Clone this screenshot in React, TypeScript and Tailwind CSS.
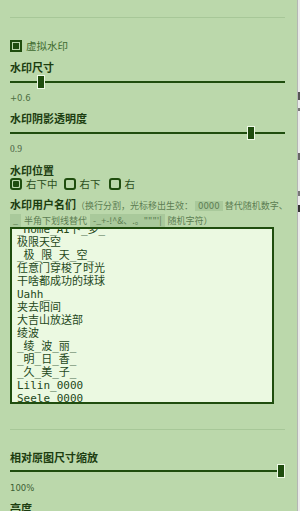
import React from "react";

const cjk = "font-['Noto_Sans_CJK_SC',sans-serif]";

function Slider({ pct }: { pct: number }) {
  return (
    <div className="relative h-[14px] w-[275px]">
      <div className="absolute left-0 right-0 top-[6px] h-[2px] bg-[#1f4d0e]" />
      <div
        className="absolute top-0 h-[14px] w-[8px] border border-[#eef8e6] bg-[#1f4d0e]"
        style={{ left: `${pct * 267}px` }}
      />
    </div>
  );
}

function Heading({ children }: { children: React.ReactNode }) {
  return (
    <div className={`${cjk} text-[11px] font-bold leading-[14px] text-[#1c3d10]`}>{children}</div>
  );
}

function Box({ checked }: { checked: boolean }) {
  return (
    <span className="flex h-[12px] w-[12px] items-center justify-center rounded-[3px] border-2 border-[#1f4d0e]">
      {checked && <span className="h-[6px] w-[6px] rounded-[1px] bg-[#1f4d0e]" />}
    </span>
  );
}

const names = [
  "_Home_AI卜_多_",
  "极限天空",
  "_极_限_天_空_",
  "任意门穿梭了时光",
  "干啥都成功的球球",
  "Uahh_",
  "夹去阳间",
  "大吉山放送部",
  "绫波",
  "_绫_波_丽_",
  "_明_日_香_",
  "_久_美_子_",
  "Lilin_0000",
  "Seele_0000",
];

export default function App() {
  return (
    <div className="flex h-[511px] w-[300px] overflow-hidden bg-[#e9e9e9]">
      <div className="h-full w-[297px] shrink-0 bg-[#bbd8ab] px-[10px]">
        <div className="mt-[17px] h-px w-[275px] bg-[#a7c798]" />

        {/* 虚拟水印 */}
        <div className="mt-[22px] flex h-[12px] items-center gap-[4px]">
          <span className="flex h-[12px] w-[12px] items-center justify-center border-2 border-[#1f4d0e]">
            <span className="h-[6px] w-[6px] bg-[#1f4d0e]" />
          </span>
          <span className={`${cjk} text-[10.5px] leading-[12px] text-[#3e6a2f]`}>虚拟水印</span>
        </div>

        <div className="mt-[8px]">
          <Heading>水印尺寸</Heading>
        </div>
        <div className="mt-[1px]">
          <Slider pct={0.1} />
        </div>
        <div className="mt-[3px] font-['DejaVu_Sans',sans-serif] text-[8.5px] leading-[12px] text-[#4d6e42]">
          +0.6
        </div>

        <div className="mt-[7px]">
          <Heading>水印阴影透明度</Heading>
        </div>
        <div className="mt-[1px]">
          <Slider pct={0.888} />
        </div>
        <div className="mt-[3px] font-['Liberation_Serif',serif] text-[9.5px] leading-[12px] text-[#4a5f43]">
          0.9
        </div>

        <div className="mt-[8px]">
          <Heading>水印位置</Heading>
        </div>
        <div className={`${cjk} mt-[1px] flex h-[12px] items-center text-[10.5px] leading-[12px] text-[#2b4f1c]`}>
          <Box checked />
          <span className="ml-[4px]">右下中</span>
          <span className="ml-[6px]">
            <Box checked={false} />
          </span>
          <span className="ml-[4px]">右下</span>
          <span className="ml-[8px]">
            <Box checked={false} />
          </span>
          <span className="ml-[4px]">右</span>
        </div>

        <div className={`${cjk} mt-[8px] w-[282px] text-[9px] leading-[13.5px] text-[#5c7d52]`}>
          <span className="text-[11px] font-bold text-[#1c3d10]">水印用户名们</span>
          <span>（换行分割，光标移出生效：</span>
          <span className="mx-[2px] bg-[#a9c99b] px-[3px] font-['DejaVu_Sans',sans-serif] text-[8.5px]">0000</span>
          <span>替代随机数字、</span>
          <span className="mr-[3px] bg-[#a9c99b] px-[3px]">_</span>
          <span>半角下划线替代</span>
          <span className="mx-[3px] bg-[#a9c99b] px-[3px]">-_+-!^&amp;、.。"""'|</span>
          <span>随机字符）</span>
        </div>

        <div className="h-[177px] w-[264px] overflow-hidden border-2 border-[#1f4d0e] bg-[#ebf9e1] pl-[5px]">
          <div className="mt-[-6.5px] font-['DejaVu_Sans_Mono','Noto_Sans_CJK_SC',monospace] text-[11px] leading-[13px] text-[#24481a]">
            {names.map((n) => (
              <div key={n} className="whitespace-pre">
                {n}
              </div>
            ))}
          </div>
        </div>

        <div className="mt-[25px] h-px w-[275px] bg-[#a7c798]" />

        <div className="mt-[20px]">
          <Heading>相对原图尺寸缩放</Heading>
        </div>
        <Slider pct={1} />
        <div className="mt-[4px] font-['DejaVu_Sans',sans-serif] text-[8.5px] leading-[12px] text-[#3d5e33]">
          100%
        </div>
        <div className="mt-[7px]">
          <Heading>亮度</Heading>
        </div>
      </div>
      <div className="h-full w-px bg-[#b5b5b5]" />
      <div className="relative h-full flex-1 bg-[#ececec]">
        <span className="absolute left-0 top-[92px] h-[8px] w-[2px] bg-[#555]" />
        <span className="absolute left-0 top-[108px] h-[3px] w-[2px] bg-[#777]" />
        <span className="absolute left-0 top-[153px] h-[7px] w-[2px] bg-[#666]" />
        <span className="absolute left-0 top-[191px] h-[5px] w-[2px] bg-[#777]" />
        <span className="absolute left-0 top-[205px] h-[7px] w-[2px] bg-[#333]" />
      </div>
    </div>
  );
}
